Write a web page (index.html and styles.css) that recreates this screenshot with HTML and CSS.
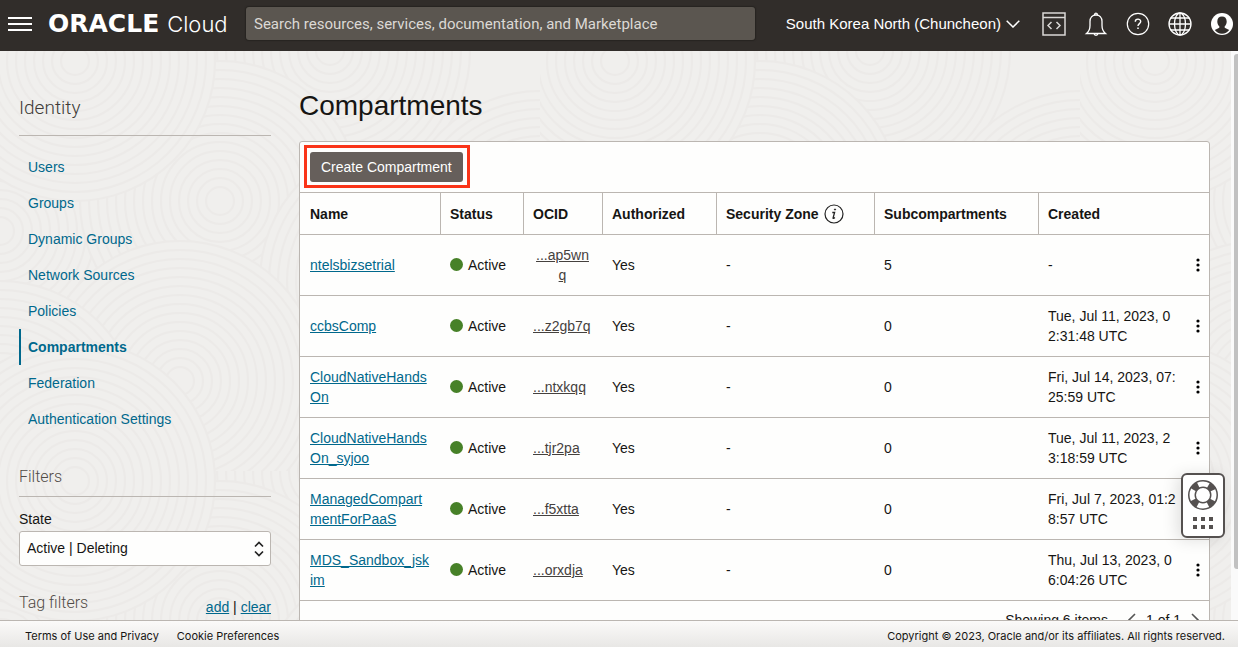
FILE: index.html
```html
<!DOCTYPE html>
<html lang="en">
<head>
<meta charset="utf-8">
<title>Compartments | Oracle Cloud</title>
<link rel="stylesheet" href="styles.css">
</head>
<body class="app">
<header class="topbar">
  <button class="icon-btn menu-btn" aria-label="Menu"><svg width="24" height="16" viewBox="0 0 24 16"><path d="M0 2h24M0 8h24M0 14h24" stroke="#fff" stroke-width="2"/></svg></button>
  <a class="brand" href="#"><span class="brand-name">ORACLE</span><span class="brand-cloud">Cloud</span></a>
  <input class="search" type="text" aria-label="Search" placeholder="Search resources, services, documentation, and Marketplace">
  <button class="region">South Korea North (Chuncheon)<svg width="14" height="8" viewBox="0 0 14 8" fill="none"><path d="M.7.8 7 7 13.300.8" stroke="#fff" stroke-width="1.500"/></svg></button>
  <div class="tools">
    <button class="icon-btn" aria-label="Developer tools"><svg width="24" height="24" viewBox="0 0 24 24" fill="none" stroke="#dad8d6" stroke-width="1.500"><path d="M1 1h22v22H1zM1 5.500h22M9.500 10l-3.500 3.500 3.500 3.500M14.500 10l3.500 3.500-3.500 3.500"/></svg></button>
    <button class="icon-btn" aria-label="Announcements"><svg width="24" height="24" viewBox="0 0 24 24" fill="none" stroke="#fff" stroke-width="1.300"><path d="M2.500 21.500h19c-2.500-2-3.500-5-3.500-8V9.500c0-4-2.500-6.500-6-6.500S6 5.500 6 9.500v4c0 3-1 6-3.500 8zM10.500 3c0-2.500 3-2.500 3 0M10 21.500c.3 2.400 3.700 2.400 4 0"/></svg></button>
    <button class="icon-btn" aria-label="Help"><svg width="24" height="24" viewBox="0 0 24 24" fill="none" stroke="#fff" stroke-width="1.200"><circle cx="12" cy="12" r="10.700"/><path d="M9.300 9.700C9.300 6.300 14.700 6.400 14.700 9.500c0 2-2.700 2.300-2.700 4.500" stroke-width="1.400"/><path d="M12 15.500V17" stroke-width="1.500"/></svg></button>
    <button class="icon-btn" aria-label="Language"><svg width="24" height="24" viewBox="0 0 24 24" fill="none" stroke="#fff" stroke-width="1.300"><circle cx="12" cy="12" r="11"/><ellipse cx="12" cy="12" rx="5.500" ry="11"/><path d="M12 1v22M1 12h22M2.800 6h18.400M2.800 18h18.400"/></svg></button>
    <button class="icon-btn" aria-label="Profile"><svg width="24" height="24" viewBox="0 0 24 24"><circle cx="12" cy="12" r="11" fill="#fff"/><path d="M12 4.500c-3 0-4.700 2-4.700 4.900 0 2.100.8 3.800 2 4.800v1.500L4.800 18c1.700 2.400 4.300 3.800 7.200 3.800s5.500-1.400 7.200-3.800l-4.500-2.300v-1.500c1.200-1 2-2.700 2-4.800 0-2.900-1.700-4.900-4.700-4.900z" fill="#312d2a"/></svg></button>
  </div>
</header>

<div class="viewport">
  <svg class="backdrop" aria-hidden="true">
    <defs>
      <g id="rings" fill="#f0efed" stroke="#eceae8" stroke-width="2">
        <circle r="140"/><circle r="131"/><circle r="122"/><circle r="113"/><circle r="104"/><circle r="95"/><circle r="86"/><circle r="77"/><circle r="68"/><circle r="59"/><circle r="50"/><circle r="41"/><circle r="32"/><circle r="23"/><circle r="14"/>
      </g>
      <pattern id="waves" width="540" height="420" patternUnits="userSpaceOnUse">
        <rect width="540" height="420" fill="#f0efed"/>
        <use href="#rings" x="330" y="0"/><use href="#rings" x="330" y="420"/>
        <use href="#rings" x="0" y="180"/><use href="#rings" x="540" y="180"/>
        <use href="#rings" x="220" y="150"/><use href="#rings" x="400" y="230"/>
        <use href="#rings" x="180" y="330"/><use href="#rings" x="0" y="370"/><use href="#rings" x="540" y="370"/>
        <use href="#rings" x="75" y="10"/><use href="#rings" x="75" y="430"/>
      </pattern>
    </defs>
    <rect width="100%" height="100%" fill="url(#waves)"/>
  </svg>
  <aside class="sidebar">
    <h2 class="side-title">Identity</h2>
    <nav class="side-nav">
      <a href="#">Users</a><a href="#">Groups</a><a href="#">Dynamic Groups</a><a href="#">Network Sources</a><a href="#">Policies</a><a class="current" href="#">Compartments</a><a href="#">Federation</a><a href="#">Authentication Settings</a>
    </nav>
    <h3 class="filter-title">Filters</h3>
    <label class="field-label" for="state">State</label>
    <div class="select-wrap">
      <select class="select" id="state"><option>Active | Deleting</option></select>
      <svg class="select-icon" width="10" height="16" viewBox="0 0 10 16" fill="none" stroke="#222" stroke-width="1.700"><path d="M1 5.500l4-4 4 4M1 10.500l4 4 4-4"/></svg>
    </div>
    <div class="tag-row"><h3 class="tag-title">Tag filters</h3><span class="tag-links"><a href="#">add</a> | <a href="#">clear</a></span></div>
  </aside>
  <main class="content">
    <h1 class="page-title">Compartments</h1>
    <section class="panel">
      <div class="actions"><span class="marked"><button class="primary">Create Compartment</button></span></div>
      <table class="grid">
        <colgroup><col class="c-name"><col class="c-status"><col class="c-ocid"><col class="c-auth"><col class="c-zone"><col class="c-sub"><col class="c-created"><col class="c-menu"></colgroup>
        <thead><tr><th>Name</th><th>Status</th><th>OCID</th><th>Authorized</th><th><span class="zone-head">Security Zone<svg width="20" height="20" viewBox="0 0 20 20" fill="none" stroke="#222"><circle cx="10" cy="10" r="9" stroke-width="1.200"/><path d="M8.300 8.500h2.300l-1.500 5.300c-.2.900.6.900 1.800-.2" stroke-width="1.300"/><circle cx="11" cy="5.500" r=".6" fill="#222"/></svg></span></th><th>Subcompartments</th><th colspan="2">Created</th></tr></thead>
        <tbody>
          <tr><td><a href="#">ntelsbizsetrial</a></td><td><span class="status">Active</span></td><td><button class="ocid">...ap5wnq</button></td><td>Yes</td><td>-</td><td>5</td><td>-</td><td><button class="kebab" aria-label="Actions"><svg width="4" height="14" viewBox="0 0 4 14"><circle cx="2" cy="2" r="1.600"/><circle cx="2" cy="7" r="1.600"/><circle cx="2" cy="12" r="1.600"/></svg></button></td></tr>
          <tr><td><a href="#">ccbsComp</a></td><td><span class="status">Active</span></td><td><button class="ocid">...z2gb7q</button></td><td>Yes</td><td>-</td><td>0</td><td>Tue, Jul 11, 2023, 02:31:48 UTC</td><td><button class="kebab" aria-label="Actions"><svg width="4" height="14" viewBox="0 0 4 14"><circle cx="2" cy="2" r="1.600"/><circle cx="2" cy="7" r="1.600"/><circle cx="2" cy="12" r="1.600"/></svg></button></td></tr>
          <tr><td><a href="#">CloudNativeHandsOn</a></td><td><span class="status">Active</span></td><td><button class="ocid">...ntxkqq</button></td><td>Yes</td><td>-</td><td>0</td><td>Fri, Jul 14, 2023, 07:25:59 UTC</td><td><button class="kebab" aria-label="Actions"><svg width="4" height="14" viewBox="0 0 4 14"><circle cx="2" cy="2" r="1.600"/><circle cx="2" cy="7" r="1.600"/><circle cx="2" cy="12" r="1.600"/></svg></button></td></tr>
          <tr><td><a href="#">CloudNativeHandsOn_syjoo</a></td><td><span class="status">Active</span></td><td><button class="ocid">...tjr2pa</button></td><td>Yes</td><td>-</td><td>0</td><td>Tue, Jul 11, 2023, 23:18:59 UTC</td><td><button class="kebab" aria-label="Actions"><svg width="4" height="14" viewBox="0 0 4 14"><circle cx="2" cy="2" r="1.600"/><circle cx="2" cy="7" r="1.600"/><circle cx="2" cy="12" r="1.600"/></svg></button></td></tr>
          <tr><td><a href="#">ManagedCompartmentForPaaS</a></td><td><span class="status">Active</span></td><td><button class="ocid">...f5xtta</button></td><td>Yes</td><td>-</td><td>0</td><td>Fri, Jul 7, 2023, 01:28:57 UTC</td><td><button class="kebab" aria-label="Actions"><svg width="4" height="14" viewBox="0 0 4 14"><circle cx="2" cy="2" r="1.600"/><circle cx="2" cy="7" r="1.600"/><circle cx="2" cy="12" r="1.600"/></svg></button></td></tr>
          <tr><td><a href="#">MDS_Sandbox_jskim</a></td><td><span class="status">Active</span></td><td><button class="ocid">...orxdja</button></td><td>Yes</td><td>-</td><td>0</td><td>Thu, Jul 13, 2023, 06:04:26 UTC</td><td><button class="kebab" aria-label="Actions"><svg width="4" height="14" viewBox="0 0 4 14"><circle cx="2" cy="2" r="1.600"/><circle cx="2" cy="7" r="1.600"/><circle cx="2" cy="12" r="1.600"/></svg></button></td></tr>
        </tbody>
      </table>
      <div class="pager"><span class="pager-count">Showing 6 items</span><button class="page-btn" aria-label="Previous page"><svg width="8" height="14" viewBox="0 0 8 14" fill="none"><path d="M7 1 1 7l6 6" stroke="#555" stroke-width="1.600"/></svg></button><span>1 of 1</span><button class="page-btn" aria-label="Next page"><svg width="8" height="14" viewBox="0 0 8 14" fill="none"><path d="M1 1l6 6-6 6" stroke="#555" stroke-width="1.600"/></svg></button></div>
    </section>
  </main>
  <div class="scroll-track"><div class="scroll-thumb"></div></div>
</div>

<footer class="footer"><a href="#">Terms of Use and Privacy</a><a href="#">Cookie Preferences</a><span class="copyright">Copyright © 2023, Oracle and/or its affiliates. All rights reserved.</span></footer>

<button class="support" aria-label="Support">
  <svg width="32" height="32" viewBox="0 0 32 32" fill="none"><circle cx="16" cy="16" r="11" stroke="#555150" stroke-width="8"/><circle cx="16" cy="16" r="11" stroke="#fff" stroke-width="5" stroke-dasharray="10.600 6.680" stroke-dashoffset="5.300"/></svg>
  <svg width="20" height="12" viewBox="0 0 20 12" fill="#555150"><path d="M0 0h4v4H0zM8 0h4v4H8zM16 0h4v4h-4zM0 8h4v4H0zM8 8h4v4H8zM16 8h4v4h-4z"/></svg>
</button>
</body>
</html>
```
FILE: styles.css
```css
* { box-sizing: border-box; }
.app { margin: 0; height: 100vh; display: flex; flex-direction: column; overflow: hidden; font: 14px/20px "Liberation Sans", Arial, sans-serif; color: #161513; background: #f0efed; }
button { font: inherit; color: inherit; background: none; border: 0; padding: 0; cursor: pointer; }
svg { display: block; flex: none; }
a { color: #00688c; }

.topbar { flex: none; height: 51px; display: flex; align-items: center; padding: 0 4px 4px 8px; background: #312d2a; color: #fff; }
.menu-btn { margin-right: 16px; }
.brand { display: flex; align-items: center; gap: 8px; width: 198px; color: #fff; text-decoration: none; white-space: nowrap; }
.brand-name { font: 700 25px/28px "DejaVu Sans", sans-serif; }
.brand-cloud { font: 300 22px/28px Inter, sans-serif; }
.search { flex: 0 1 509px; min-width: 0; height: 33px; padding: 0 8px; border: 0; border-radius: 3px; background: #5b5650; color: #fff; font: 15px/20px Roboto, sans-serif; box-shadow: 0 0 1px 1px #272421; }
.search::placeholder { color: #dcd9d5; opacity: 1; }
.region { margin-left: auto; display: flex; align-items: center; gap: 5px; font-size: 15px; white-space: nowrap; }
.tools { display: flex; gap: 18px; margin-left: 22px; }

.viewport { position: relative; flex: 1; min-height: 0; display: flex; align-items: flex-start; overflow: hidden; }
.backdrop { position: absolute; inset: 0; width: 100%; height: 100%; }
.sidebar, .content, .scroll-track { position: relative; }
.sidebar { flex: none; width: 271px; padding: 44px 0 0 19px; }
.side-title { margin: 0 0 13px; padding-bottom: 15px; border-bottom: 1px solid #bbb6b1; font: 300 19px/25px Roboto, sans-serif; color: #403c38; }
.side-nav { display: flex; flex-direction: column; }
.side-nav a { padding: 8px 7px; border-left: 2px solid transparent; text-decoration: none; }
.side-nav .current { border-color: #00688c; font-weight: 700; }
.filter-title { margin: 30px 0 12px; padding-bottom: 9px; border-bottom: 1px solid #bbb6b1; font: 300 16px/20px Roboto, sans-serif; color: #504b46; }
.field-label { display: block; margin-bottom: 2px; }
.select-wrap { position: relative; }
.select { display: block; width: 100%; height: 35px; padding: 0 24px 2px 7px; border: 1px solid #bbb6b1; border-radius: 3px; background: #fefefd; color: inherit; font: inherit; appearance: none; }
.select-icon { position: absolute; right: 7px; top: 10px; pointer-events: none; }
.tag-row { display: flex; justify-content: space-between; align-items: flex-end; margin-top: 27px; }
.tag-title { margin: 0 0 4px; font: 300 16px/20px Roboto, sans-serif; color: #504b46; }

.content { flex: 1; min-width: 0; padding: 37px 21px 0 28px; }
.page-title { margin: 0 0 17px; font-size: 28px; line-height: 36px; font-weight: 400; }
.panel { border: 1px solid #bbb6b1; border-radius: 3px; background: #fefefd; }
.actions { padding: 10px; }
.marked { position: relative; display: inline-block; vertical-align: top; }
.marked::after { content: ""; position: absolute; inset: -7px -7px -6px -6px; border: 3px solid #fa3418; pointer-events: none; }
.primary { display: block; height: 30px; padding: 0 11px; border-radius: 3px; background: #665f5b; color: #fff; }
.grid { width: 100%; table-layout: fixed; border-collapse: separate; border-spacing: 0; }
.c-name { width: 140px; } .c-status { width: 83px; } .c-ocid { width: 79px; } .c-auth { width: 114px; }
.c-zone { width: 158px; } .c-sub { width: 164px; } .c-menu { width: 32px; }
.grid th { height: 43px; padding: 0 9px; border-top: 1px solid #bbb6b1; border-bottom: 1px solid #bbb6b1; text-align: left; white-space: nowrap; }
.grid th:first-child { padding-left: 10px; }
.grid th + th { border-left: 1px solid #bbb6b1; }
.grid td { height: 61px; padding: 0 10px 1px; border-bottom: 1px solid #bbb6b1; word-break: break-all; }
.grid td:nth-child(7) { padding-right: 0; }
.grid td:last-child { padding: 0 9px 0 0; }
.zone-head { display: flex; align-items: center; gap: 5px; }
.status { display: flex; align-items: center; gap: 5px; }
.status::before { content: ""; width: 13px; height: 13px; border-radius: 50%; background: #478128; }
.ocid { color: #45413e; text-decoration: underline; word-break: break-all; }
.kebab { display: block; margin-left: auto; }
.pager { display: flex; align-items: center; justify-content: flex-end; gap: 10px; padding: 9px 10px; }
.pager-count { margin-right: 10px; }
.scroll-track { flex: none; align-self: stretch; width: 7px; padding: 3px 0 0 3px; background: #fafafa; }
.scroll-thumb { height: 91%; background: #c1c1c1; border-radius: 3px 0 0 3px; }

.footer { position: relative; flex: none; height: 27px; display: flex; align-items: center; gap: 18px; padding: 4px 13px 0 25px; border-top: 1px solid #bbb6b1; background: linear-gradient(#fbfaf9, #e8e7e5); font: 11px/16px Inter, sans-serif; white-space: nowrap; }
.footer a { color: inherit; text-decoration: none; }
.copyright { margin-left: auto; }
.support { position: fixed; right: 13px; bottom: 109px; display: flex; flex-direction: column; align-items: center; gap: 6px; padding: 4px 4px 7px; border: 2px solid #555150; border-radius: 6px; background: #fff; width: 44px; box-shadow: -4px 2px 16px rgba(0,0,0,.12); }
```
